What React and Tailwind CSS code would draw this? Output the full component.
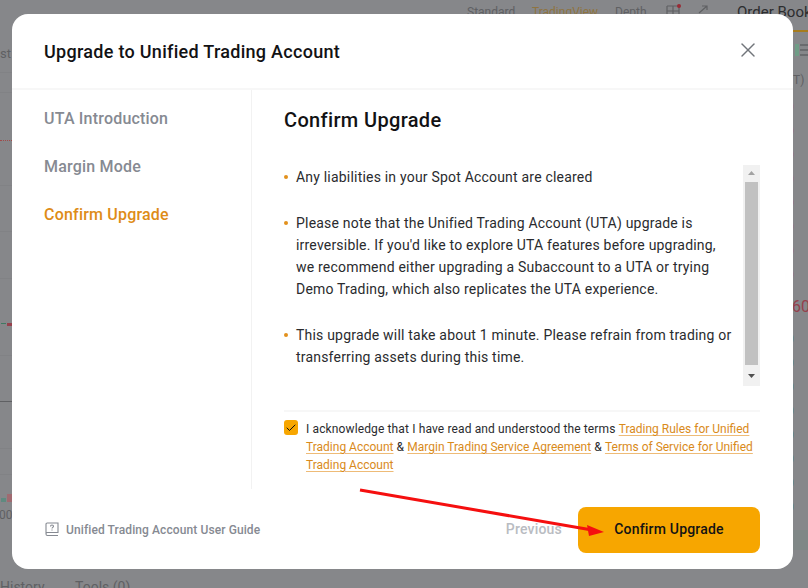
import React from 'react';
import { X, Check } from 'lucide-react';

const BULLETS = [
  'Any liabilities in your Spot Account are cleared',
  "Please note that the Unified Trading Account (UTA) upgrade is irreversible. If you'd like to explore UTA features before upgrading, we recommend either upgrading a Subaccount to a UTA or trying Demo Trading, which also replicates the UTA experience.",
  'This upgrade will take about 1 minute. Please refrain from trading or transferring assets during this time.',
];

const STEPS = [
  { label: 'UTA Introduction', active: false },
  { label: 'Margin Mode', active: false },
  { label: 'Confirm Upgrade', active: true },
];

const RED_ROWS = [100, 124, 148, 172, 196, 220, 244, 268];
const GREEN_ROWS = [332, 356, 380, 404, 428, 452, 476, 500];
const GRID_ROWS = [72, 92, 185, 231, 278, 355, 448, 474];

const Terms = ({ children }) => (
  <a className="tracking-normal text-[#d98a1a] underline decoration-[#eebb77] underline-offset-2">{children}</a>
);

// the trading page dimmed behind the modal
const Backdrop = () => (
  <div className="absolute inset-0 overflow-hidden bg-[#86878a] text-[12px] text-[#5f6063]">
    {GRID_ROWS.map((y) => (
      <div key={y} className="absolute left-0 h-px w-[12px] bg-[#818285]" style={{ top: y }} />
    ))}
    <span className="absolute left-[467px] top-[3px] whitespace-nowrap">Standard</span>
    <span className="absolute left-[532px] top-[3px] whitespace-nowrap text-[#8f7440]">TradingView</span>
    <span className="absolute left-[615px] top-[3px] whitespace-nowrap">Depth</span>
    <svg className="absolute left-[666px] top-[4px]" width="50" height="12" viewBox="0 0 50 12" fill="none" stroke="#5f6063" strokeWidth="1.2">
      <path d="M1 2H13V12M1 2V12M7 2V12M1 7H13" />
      <circle cx="13" cy="2" r="2" fill="#9a2a35" stroke="none" />
      <path d="M33 9L41 2M36 2H41V6" />
    </svg>
    <span className="absolute left-[737px] top-[1px] whitespace-nowrap text-[15px] text-[#2c2d2f]">Order Book</span>
    <div className="absolute left-[793px] top-[30px] h-[2px] w-[15px] bg-[#a67c1e]" />
    <div className="absolute left-[795px] top-[44px] h-[12px] w-[4px] bg-[#6f9c86]" />
    <div className="absolute left-[800px] top-[44px] flex h-[12px] w-[8px] flex-col justify-between">
      <div className="h-[2px] bg-[#6a6b6e]" />
      <div className="h-[2px] bg-[#6a6b6e]" />
      <div className="h-[2px] bg-[#6a6b6e]" />
    </div>
    <span className="absolute left-[793px] top-[71px]">T)</span>
    {RED_ROWS.map((y) => (
      <span key={y} className="absolute left-[787px] leading-[14px] text-[#96404c]" style={{ top: y }}>0</span>
    ))}
    <span className="absolute left-[792px] top-[296px] text-[16px] leading-[22px] text-[#96404c]">60</span>
    {GREEN_ROWS.map((y) => (
      <span key={y} className="absolute left-[787px] leading-[14px] text-[#3f7a62]" style={{ top: y }}>0</span>
    ))}
    <div className="absolute left-[793px] top-[530px] h-[20px] w-[15px] bg-[#7f8786]" />
    <span className="absolute left-0 top-[44px] text-[13px]">st T</span>
    <span className="absolute left-0 top-[577px] whitespace-nowrap text-[14px]">History</span>
    <span className="absolute left-[75px] top-[577px] whitespace-nowrap text-[14px]">Tools (0)</span>
    <div className="absolute left-0 top-[140px] w-[12px] border-t border-dotted border-[#a04a4a]" />
    <div className="absolute left-0 top-[401px] h-px w-[12px] bg-[#5f6063]" />
    <div className="absolute left-[1px] top-[323px] h-px w-[5px] bg-[#3f7a62]" />
    <div className="absolute left-[7px] top-[323px] h-[3px] w-[5px] bg-[#96404c]" />
    <div className="absolute left-[1px] top-[498px] h-[4px] w-[5px] bg-[#5f8a80]" />
    <div className="absolute left-[7px] top-[494px] h-[8px] w-[5px] bg-[#a06a70]" />
    <span className="absolute left-[-4px] top-[506px]">:00</span>
  </div>
);

export default function App() {
  return (
    <div className="relative h-[588px] w-[808px] overflow-hidden font-['Roboto',sans-serif]">
      <Backdrop />
      <div className="relative pl-[12px] pt-[14px]">
        <div className="flex h-[555px] w-[781px] flex-col rounded-[16px] bg-white">
          <div className="flex h-[76px] items-center justify-between border-b-2 border-[#f7f7f7] pl-[32px] pr-[33px]">
            <h1 className="text-[18px] font-medium tracking-[0.29px] text-[#121214]">Upgrade to Unified Trading Account</h1>
            <X size={24} strokeWidth={1.4} className="mb-[3px] text-[#71757a]" />
          </div>

          <div className="flex h-[399px]">
            <div className="flex w-[240px] flex-col gap-[26px] border-r border-[#f2f2f2] pl-[32px] pt-[18px]">
              {STEPS.map((s) => (
                <div key={s.label} className={`text-[16px] font-medium leading-[22px] tracking-[0.2px] ${s.active ? 'text-[#de8c17]' : 'text-[#868a92]'}`}>
                  {s.label}
                </div>
              ))}
            </div>

            <div className="flex flex-1 flex-col pl-[32px] pr-[33px]">
              <h2 className="pt-[16px] text-[20px] font-medium leading-[28px] tracking-[0.35px] text-[#121214]">Confirm Upgrade</h2>

              <div className="mt-[31px] flex h-[221px]">
                <div className="flex flex-1 flex-col gap-[24px] pr-[8px] pt-[1px]">
                  {BULLETS.map((b) => (
                    <div key={b} className="flex text-[14px] leading-[22px] tracking-[0.2px] text-[#2a2b2e]">
                      <span className="mr-[8px] mt-[9px] h-[4px] w-[4px] shrink-0 rounded-full bg-[#e2901c]" />
                      <p>{b}</p>
                    </div>
                  ))}
                </div>
                <div className="flex w-[17px] shrink-0 flex-col items-center bg-[#f1f1f1]">
                  <svg width="17" height="17" viewBox="0 0 17 17"><path d="M8.5 6 L12 10 L5 10 Z" fill="#a3a3a3" /></svg>
                  <div className="w-[13px] flex-1 bg-[#c1c1c1]" />
                  <svg width="17" height="21" viewBox="0 0 17 21"><path d="M5 9 L12 9 L8.5 13 Z" fill="#505050" /></svg>
                </div>
              </div>

              <div className="mt-[24px] flex gap-[8px] border-t-2 border-[#f7f7f7] pt-[8px]">
                <div className="flex h-[15px] w-[14px] shrink-0 items-center justify-center rounded-[3px] bg-[#f7a600]">
                  <Check size={12} strokeWidth={2} className="text-[#121214]" />
                </div>
                <p className="text-[12px] leading-[18px] tracking-[0.13px] text-[#2a2b2e]">
                  I acknowledge that I have read and understood the terms{' '}
                  <Terms>Trading Rules for Unified Trading Account</Terms> &amp;{' '}
                  <Terms>Margin Trading Service Agreement</Terms> &amp;{' '}
                  <Terms>Terms of Service for Unified Trading Account</Terms>
                </p>
              </div>
            </div>
          </div>

          <div className="flex flex-1 items-center justify-between px-[33px] pt-[1px]">
            <div className="flex items-center gap-[7px] text-[12px] font-medium tracking-[0.1px] text-[#868a92]">
              <svg width="14" height="15" viewBox="0 0 14 15" fill="none" stroke="#868a92" strokeWidth="1.1">
                <path d="M1 12V2.2C1 1.5 1.5 1 2.2 1H13V10.5H2.4C1.6 10.5 1 11.2 1 12C1 12.8 1.6 13.5 2.4 13.5H13" />
                <path d="M5.5 4.4C5.5 3.4 6.2 3 7 3C7.8 3 8.5 3.5 8.5 4.3C8.5 5.3 7 5.4 7 6.6" />
                <path d="M7 7.6V8.6" />
              </svg>
              Unified Trading Account User Guide
            </div>
            <div className="flex items-center gap-[16px]">
              <span className="text-[14px] font-medium tracking-[0.2px] text-[#b9bcc2]">Previous</span>
              <button className="h-[46px] w-[182px] rounded-[8px] bg-[#f7a600] text-[14px] font-medium tracking-[0.2px] text-[#121214]">
                Confirm Upgrade
              </button>
            </div>
          </div>
        </div>
      </div>

      {/* red annotation arrow drawn on top of the screenshot */}
      <svg className="pointer-events-none absolute left-0 top-0" width="808" height="588">
        <path d="M360 490 L592 530" stroke="#f50f0f" strokeWidth="3" />
        <path d="M604 532 L587 525 L589 536 Z" fill="#f50f0f" />
      </svg>
    </div>
  );
}
